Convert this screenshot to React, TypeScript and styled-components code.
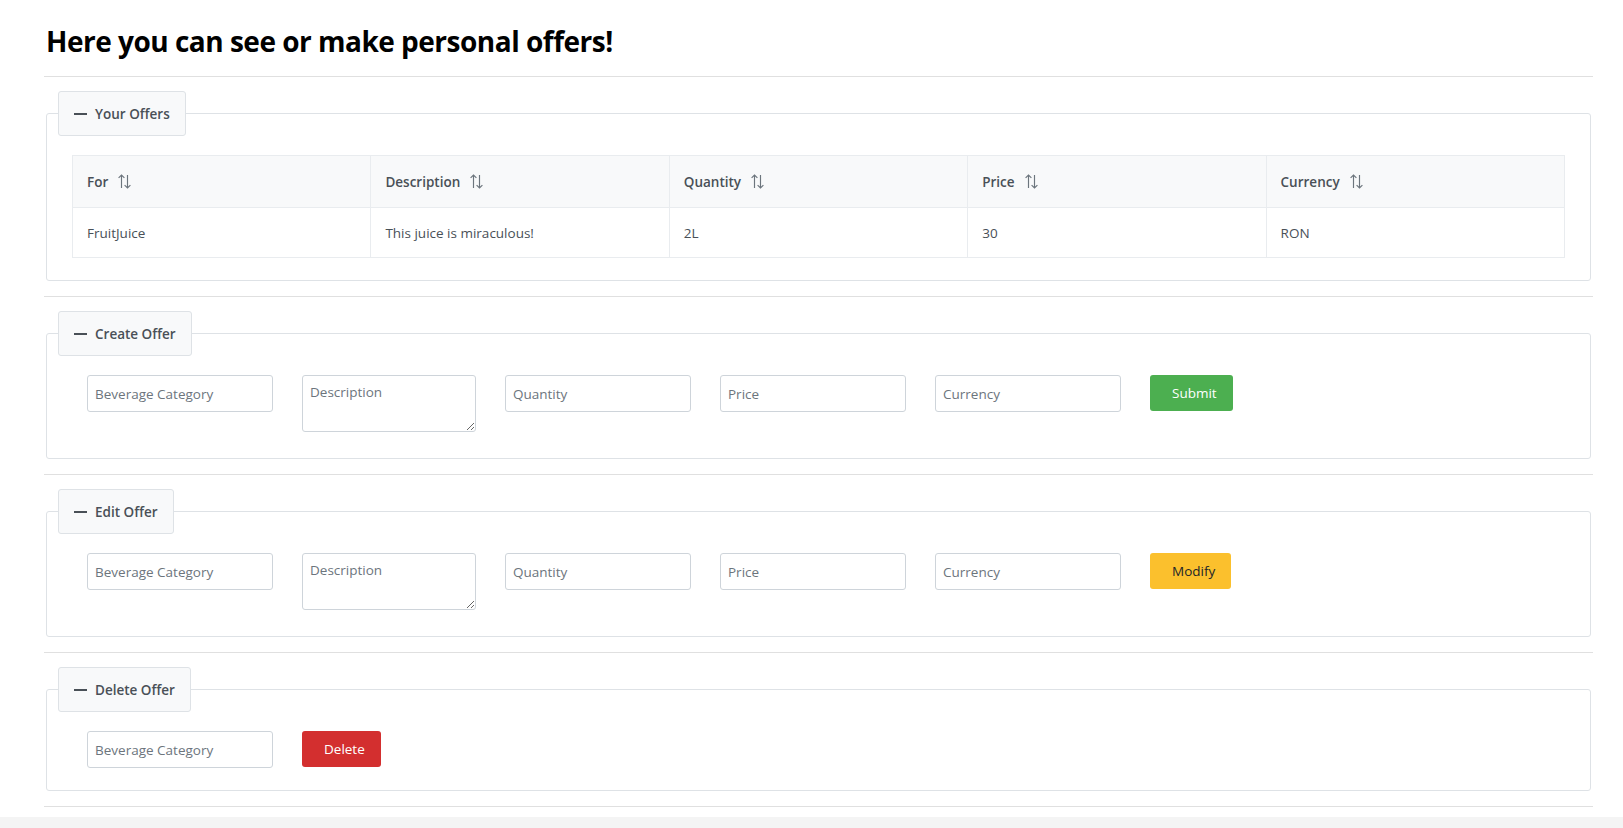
import styled, { createGlobalStyle } from "styled-components";

const GlobalStyle = createGlobalStyle`
  body {
    margin: 0;
    background-color: #f4f4f4;
    font-family: "Open Sans", "Liberation Sans", sans-serif;
    color: #495057;
  }
  * {
    box-sizing: border-box;
  }
`;

type offerType = {
  beverage: string;
  description: string;
  quantity: string;
  price: string;
  currency: string;
};

const offers: offerType[] = [
  {
    beverage: "FruitJuice",
    description: "This juice is miraculous!",
    quantity: "2L",
    price: "30",
    currency: "RON",
  },
];

const columns = ["For", "Description", "Quantity", "Price", "Currency"];

function SortIcon() {
  return (
    <svg width="15" height="15" viewBox="0 0 15 15" fill="none">
      <path
        d="M4.5 14V1M1.6 3.9L4.5 1l2.9 2.9"
        stroke="#6c757d"
        strokeWidth="1.15"
      />
      <path
        d="M10.5 1v13M7.6 11.1l2.9 2.9 2.9-2.9"
        stroke="#6c757d"
        strokeWidth="1.15"
      />
    </svg>
  );
}

function Section({
  title,
  children,
}: {
  title: string;
  children: React.ReactNode;
}) {
  return (
    <>
      <Fieldset>
        <Legend>
          <MinusIcon />
          <span>{title}</span>
        </Legend>
        <FieldsetContent>{children}</FieldsetContent>
      </Fieldset>
      <Divider />
    </>
  );
}

function OfferForm({
  buttonText,
  kind,
}: {
  buttonText: string;
  kind: "success" | "warning";
}) {
  return (
    <FormRow $extra={4}>
      <TextInput placeholder="Beverage Category" />
      <TextArea placeholder="Description" rows={2} />
      <TextInput placeholder="Quantity" />
      <TextInput placeholder="Price" />
      <TextInput placeholder="Currency" />
      <ActionButton $kind={kind}>{buttonText}</ActionButton>
    </FormRow>
  );
}

export default function App() {
  return (
    <Page>
      <GlobalStyle />
      <Title>Here you can see or make personal offers!</Title>
      <Divider />

      <Section title="Your Offers">
        <Table>
          <thead>
            <tr>
              {columns.map((c) => (
                <HeadCell key={c}>
                  <HeadInner>
                    {c}
                    <SortIcon />
                  </HeadInner>
                </HeadCell>
              ))}
            </tr>
          </thead>
          <tbody>
            {offers.map((o) => (
              <tr key={o.beverage}>
                <BodyCell>{o.beverage}</BodyCell>
                <BodyCell>{o.description}</BodyCell>
                <BodyCell>{o.quantity}</BodyCell>
                <BodyCell>{o.price}</BodyCell>
                <BodyCell>{o.currency}</BodyCell>
              </tr>
            ))}
          </tbody>
        </Table>
      </Section>

      <Section title="Create Offer">
        <OfferForm buttonText="Submit" kind="success" />
      </Section>

      <Section title="Edit Offer">
        <OfferForm buttonText="Modify" kind="warning" />
      </Section>

      <Section title="Delete Offer">
        <FormRow $extra={0}>
          <TextInput placeholder="Beverage Category" />
          <ActionButton $kind="danger">Delete</ActionButton>
        </FormRow>
      </Section>
    </Page>
  );
}

const Page = styled.div`
  background-color: #ffffff;
  padding: 23px 30px 10px 44px;
`;

const Title = styled.h2`
  margin: 0 0 17px 2px;
  font-size: 28px;
  line-height: 36px;
  font-weight: 700;
  color: #000000;
  letter-spacing: -0.5px;
`;

const Divider = styled.hr`
  border: none;
  border-top: 1px solid #e0e0e0;
  margin: 0 0 14px;
  &:last-child {
    margin-bottom: 0;
  }
`;

const Fieldset = styled.fieldset`
  margin: 0 2px 15px;
  padding: 0 11px;
  border: 1px solid #dee2e6;
  border-radius: 3px;
`;

const Legend = styled.legend`
  display: flex;
  align-items: center;
  gap: 8px;
  height: 45px;
  padding: 0 15px;
  border: 1px solid #dee2e6;
  border-radius: 3px;
  background-color: #f8f9fa;
  color: #495057;
  font-size: 13.5px;
  font-weight: 600;
`;

const MinusIcon = styled.span`
  display: block;
  width: 13px;
  height: 2px;
  background-color: #495057;
`;

const FieldsetContent = styled.div`
  padding: 19px 14px 22px;
`;

const Table = styled.table`
  width: 100%;
  border-collapse: collapse;
  table-layout: fixed;
  font-size: 13.5px;
`;

const HeadCell = styled.th`
  text-align: left;
  padding: 15.5px 14px;
  line-height: 20px;
  background-color: #f8f9fa;
  border: 1px solid #e9ecef;
  color: #495057;
  font-weight: 600;
`;

const HeadInner = styled.div`
  display: flex;
  align-items: center;
  gap: 9px;
`;

const BodyCell = styled.td`
  padding: 14.5px 14px;
  line-height: 20px;
  border: 1px solid #e9ecef;
  color: #495057;
`;

const FormRow = styled.div<{ $extra: number }>`
  display: flex;
  align-items: flex-start;
  gap: 29px;
  padding-left: 15px;
  margin-bottom: ${({ $extra }) => $extra}px;
`;

const TextInput = styled.input`
  width: 186px;
  height: 37px;
  padding: 0 7px;
  border: 1px solid #ced4da;
  border-radius: 3px;
  font-family: "Open Sans", "Liberation Sans", sans-serif;
  font-size: 13.5px;
  color: #495057;
  &::placeholder {
    color: #6c757d;
  }
`;

const TextArea = styled.textarea`
  width: 174px;
  height: 57px;
  padding: 7px;
  border: 1px solid #ced4da;
  border-radius: 3px;
  font-family: "Open Sans", "Liberation Sans", sans-serif;
  font-size: 13.5px;
  color: #495057;
  &::placeholder {
    color: #6c757d;
  }
`;

const buttonColors = {
  success: { bg: "#4caf50", fg: "#ffffff" },
  warning: { bg: "#fbc02d", fg: "#212529" },
  danger: { bg: "#d32f2f", fg: "#ffffff" },
};

const ActionButton = styled.button<{ $kind: "success" | "warning" | "danger" }>`
  height: 36px;
  padding: 0 16px 0 22px;
  border: none;
  border-radius: 3px;
  font-family: "Open Sans", "Liberation Sans", sans-serif;
  font-size: 13.5px;
  background-color: ${({ $kind }) => buttonColors[$kind].bg};
  color: ${({ $kind }) => buttonColors[$kind].fg};
  cursor: pointer;
`;
